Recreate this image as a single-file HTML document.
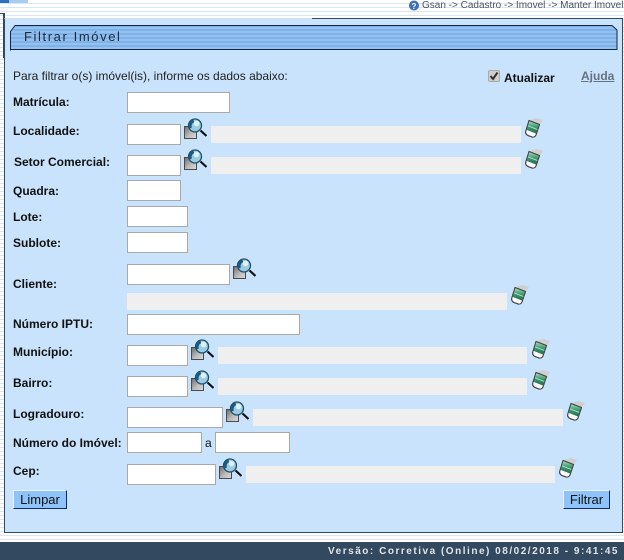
<!DOCTYPE html>
<html><head><meta charset="utf-8"><style>
html,body{margin:0;padding:0}
body{width:624px;height:560px;overflow:hidden;position:relative;font-family:"Liberation Sans",Arial,sans-serif;color:#000;
background:repeating-linear-gradient(to bottom,#fff 0,#fff 3px,#d6e6f4 3px,#d6e6f4 4px)}
div,span,svg{position:absolute;box-sizing:border-box}
.l{left:13px;font-size:12px;font-weight:bold;line-height:14px;color:#111;white-space:nowrap}
.i{background:#fff;border:1px solid #a9a9a9;height:21px;left:127px}
.r{background:#efefef;height:17px}
.b{background:#8fc4fb;border:1px solid #0a246a;border-left-color:#e8f2fc;border-top-color:#e8f2fc;border-right-color:#0d2a70;border-bottom-color:#0d2a70;height:19px;top:490px;font-size:13px;line-height:17px;text-align:center;color:#111}
</style></head><body>
<svg width="0" height="0" style="left:0;top:0"><defs>
<linearGradient id="dg" x1="0" y1="0" x2="1" y2="1"><stop offset="0" stop-color="#6a6a6a"/><stop offset=".55" stop-color="#bcbcbc"/><stop offset="1" stop-color="#dcdcdc"/></linearGradient>
<symbol id="lupa" viewBox="0 0 24 23">
<path d="M1.500 8.500h9l3 3v9H1.500z" fill="url(#dg)" stroke="#4a4a4a" stroke-width="1"/>
<path d="M17.500 12.500l6 5.500" stroke="#111" stroke-width="2.200" fill="none"/>
<circle cx="12" cy="7.500" r="6.500" fill="#9ccbe2" stroke="#1d4f6a" stroke-width="1.300"/>
<path d="M7.800 10a5 5 0 0 1 3-7" stroke="#1a5a80" stroke-width="2.600" fill="none"/>
<circle cx="13.500" cy="5.500" r="2.800" fill="#dff1f8"/>
</symbol>
<linearGradient id="eg" x1="0" y1="0" x2="0" y2="1"><stop offset="0" stop-color="#a9dcc0"/><stop offset=".45" stop-color="#3f9d72"/><stop offset="1" stop-color="#1f6e4e"/></linearGradient>
<symbol id="bor" viewBox="0 0 18 20">
<path d="M5 2L11 0l7 2-3 4.500z" fill="#cfcfcf"/>
<path d="M4 2.500L14.500 6.500 11 17Q10 19.500 7 19L3 17.500Q0 16 .8 13z" fill="#fff" stroke="#444" stroke-width="1"/>
<path d="M4 3L14 6.800 11 15.500 1.200 11.800z" fill="url(#eg)"/>
<path d="M2.700 7.800l10 3.800" stroke="#c4ead4" stroke-width=".8"/>
<path d="M4 2.500L14.500 6.500 11 17Q10 19.500 7 19L3 17.500Q0 16 .8 13z" fill="none" stroke="#444" stroke-width="1"/>
</symbol></defs></svg>

<div style="left:0;top:0;width:28px;height:3px;background:#a9cdf0"></div>
<div style="left:0;top:0;width:9px;height:3px;background:#2f6fc0"></div>
<div style="left:0;top:13px;width:5px;height:45px;border-top:1px solid #34495e;border-right:2px solid #34495e"></div>

<svg style="left:408px;top:0" width="12" height="11" viewBox="0 0 12 11"><circle cx="6" cy="5.500" r="5" fill="#3f6fb5"/><text x="6" y="9" font-size="8" font-weight="bold" fill="#fff" text-anchor="middle" font-family="Liberation Sans">?</text></svg>
<div style="left:422px;top:-1px;font-size:10px;line-height:13px;color:#4a5560;white-space:nowrap;width:202px">Gsan -&gt; Cadastro -&gt; Imovel -&gt; Manter Imovel</div>

<div style="left:4px;top:18px;width:619px;height:515px;background:#c9e3fd;border:1px solid #34495e;border-top-color:#c9e3fd"></div>
<div style="left:312px;top:18px;width:311px;height:1px;background:#2c4a66"></div>

<svg style="left:10px;top:25px" width="608" height="26" viewBox="0 0 608 26">
<defs><pattern id="st" width="4" height="4" patternUnits="userSpaceOnUse"><rect width="4" height="4" fill="#7fb2e8"/><rect y="2" width="4" height="2" fill="#94c1f0"/></pattern></defs>
<path d="M.5 25.500V6.500L5 .5H602L607 5V24.500H.5z" fill="url(#st)" stroke="#14264a"/></svg>
<div style="left:24px;top:29px;font-size:13px;line-height:15px;letter-spacing:1.600px;color:#1c2a3a;white-space:nowrap">Filtrar Imóvel</div>

<div style="left:13px;top:69px;font-size:12px;line-height:14px;color:#222;white-space:nowrap">Para filtrar o(s) imóvel(is), informe os dados abaixo:</div>
<div style="left:488px;top:70px;width:12px;height:12px;background:#cfcfcf;border:1px solid #aaa;border-radius:2px"></div>
<svg style="left:489px;top:71px" width="10" height="10" viewBox="0 0 10 10"><path d="M1.500 5l2.500 3 4.500-6.500" stroke="#333" stroke-width="2" fill="none"/></svg>
<div style="left:504px;top:71px;font-size:12px;font-weight:bold;line-height:15px;color:#111;white-space:nowrap">Atualizar</div>
<div style="left:581px;top:69px;font-size:12px;font-weight:bold;line-height:14px;color:#66737f;text-decoration:underline;white-space:nowrap">Ajuda</div>

<div class="l" style="top:95px">Matrícula:</div>
<div class="l" style="top:124px">Localidade:</div>
<div class="l" style="top:155px;left:14px">Setor Comercial:</div>
<div class="l" style="top:184px">Quadra:</div>
<div class="l" style="top:210px">Lote:</div>
<div class="l" style="top:236px">Sublote:</div>
<div class="l" style="top:277px">Cliente:</div>
<div class="l" style="top:317px">Número IPTU:</div>
<div class="l" style="top:345px">Município:</div>
<div class="l" style="top:376px">Bairro:</div>
<div class="l" style="top:407px">Logradouro:</div>
<div class="l" style="top:436px">Número do Imóvel:</div>
<div class="l" style="top:464px">Cep:</div>
<div style="left:205px;top:436px;font-size:12px;line-height:14px;color:#111">a</div>

<div class="i" style="top:92px;width:103px"></div>
<div class="i" style="top:124px;width:54px"></div>
<div class="i" style="top:155px;width:54px"></div>
<div class="i" style="top:180px;width:54px"></div>
<div class="i" style="top:206px;width:61px"></div>
<div class="i" style="top:232px;width:61px"></div>
<div class="i" style="top:264px;width:103px"></div>
<div class="i" style="top:314px;width:173px"></div>
<div class="i" style="top:345px;width:61px"></div>
<div class="i" style="top:376px;width:61px"></div>
<div class="i" style="top:407px;width:96px"></div>
<div class="i" style="top:432px;width:75px"></div>
<div class="i" style="top:432px;left:215px;width:75px"></div>
<div class="i" style="top:464px;width:89px"></div>

<div class="r" style="left:211px;top:126px;width:310px"></div>
<div class="r" style="left:211px;top:157px;width:310px"></div>
<div class="r" style="left:127px;top:293px;width:380px"></div>
<div class="r" style="left:218px;top:347px;width:309px"></div>
<div class="r" style="left:218px;top:378px;width:309px"></div>
<div class="r" style="left:253px;top:409px;width:310px"></div>
<div class="r" style="left:246px;top:466px;width:309px"></div>

<svg style="left:183px;top:118px" width="24" height="23"><use href="#lupa"/></svg>
<svg style="left:183px;top:149px" width="24" height="23"><use href="#lupa"/></svg>
<svg style="left:232px;top:258px" width="24" height="23"><use href="#lupa"/></svg>
<svg style="left:190px;top:339px" width="24" height="23"><use href="#lupa"/></svg>
<svg style="left:190px;top:370px" width="24" height="23"><use href="#lupa"/></svg>
<svg style="left:225px;top:401px" width="24" height="23"><use href="#lupa"/></svg>
<svg style="left:218px;top:458px" width="24" height="23"><use href="#lupa"/></svg>

<svg style="left:525px;top:118px" width="18" height="20"><use href="#bor"/></svg>
<svg style="left:525px;top:149px" width="18" height="20"><use href="#bor"/></svg>
<svg style="left:511px;top:285px" width="18" height="20"><use href="#bor"/></svg>
<svg style="left:532px;top:339px" width="18" height="20"><use href="#bor"/></svg>
<svg style="left:532px;top:370px" width="18" height="20"><use href="#bor"/></svg>
<svg style="left:567px;top:401px" width="18" height="20"><use href="#bor"/></svg>
<svg style="left:559px;top:458px" width="18" height="20"><use href="#bor"/></svg>

<div class="b" style="left:13px;width:54px">Limpar</div>
<div class="b" style="left:563px;width:47px">Filtrar</div>

<div style="left:0;top:542px;width:624px;height:18px;background:#33495f"></div>
<div style="left:328px;top:546px;font-size:10px;font-weight:bold;line-height:12px;letter-spacing:1.520px;color:#dfe6ec;white-space:nowrap">Versão: Corretiva (Online) 08/02/2018 - 9:41:45</div>
</body></html>
